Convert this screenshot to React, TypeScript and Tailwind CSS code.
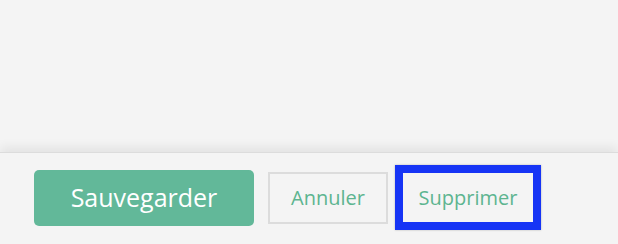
import React from 'react';

export default function App() {
  return (
    <div className="w-[618px] h-[244px] bg-[#f4f4f4] flex flex-col overflow-hidden" style={{ fontFamily: '"Open Sans", sans-serif' }}>
      {/* empty content area */}
      <div className="h-[152px] shrink-0" />

      {/* action bar */}
      <div className="flex-1 border-t border-[#dcdcdc] bg-[#f4f4f4] shadow-[0_-5px_10px_rgba(0,0,0,0.07)] flex items-center pl-[34px] pb-[2px]">
        <button className="w-[220px] h-[56px] rounded-[5px] bg-[#62b899] text-white text-[25px] leading-none">
          Sauvegarder
        </button>
        <button className="ml-[14px] w-[120px] h-[52px] border-2 border-[#dcdcdc] bg-[#f4f4f4] text-[#5db590] text-[20px] leading-none">
          Annuler
        </button>
        <button className="ml-[7px] w-[146px] h-[65px] border-[8px] border-[#1634f5] bg-[#f4f4f4] text-[#5db590] text-[20px] leading-none shadow-[0_0_2px_rgba(0,0,0,0.25)]">
          Supprimer
        </button>
      </div>
    </div>
  );
}
